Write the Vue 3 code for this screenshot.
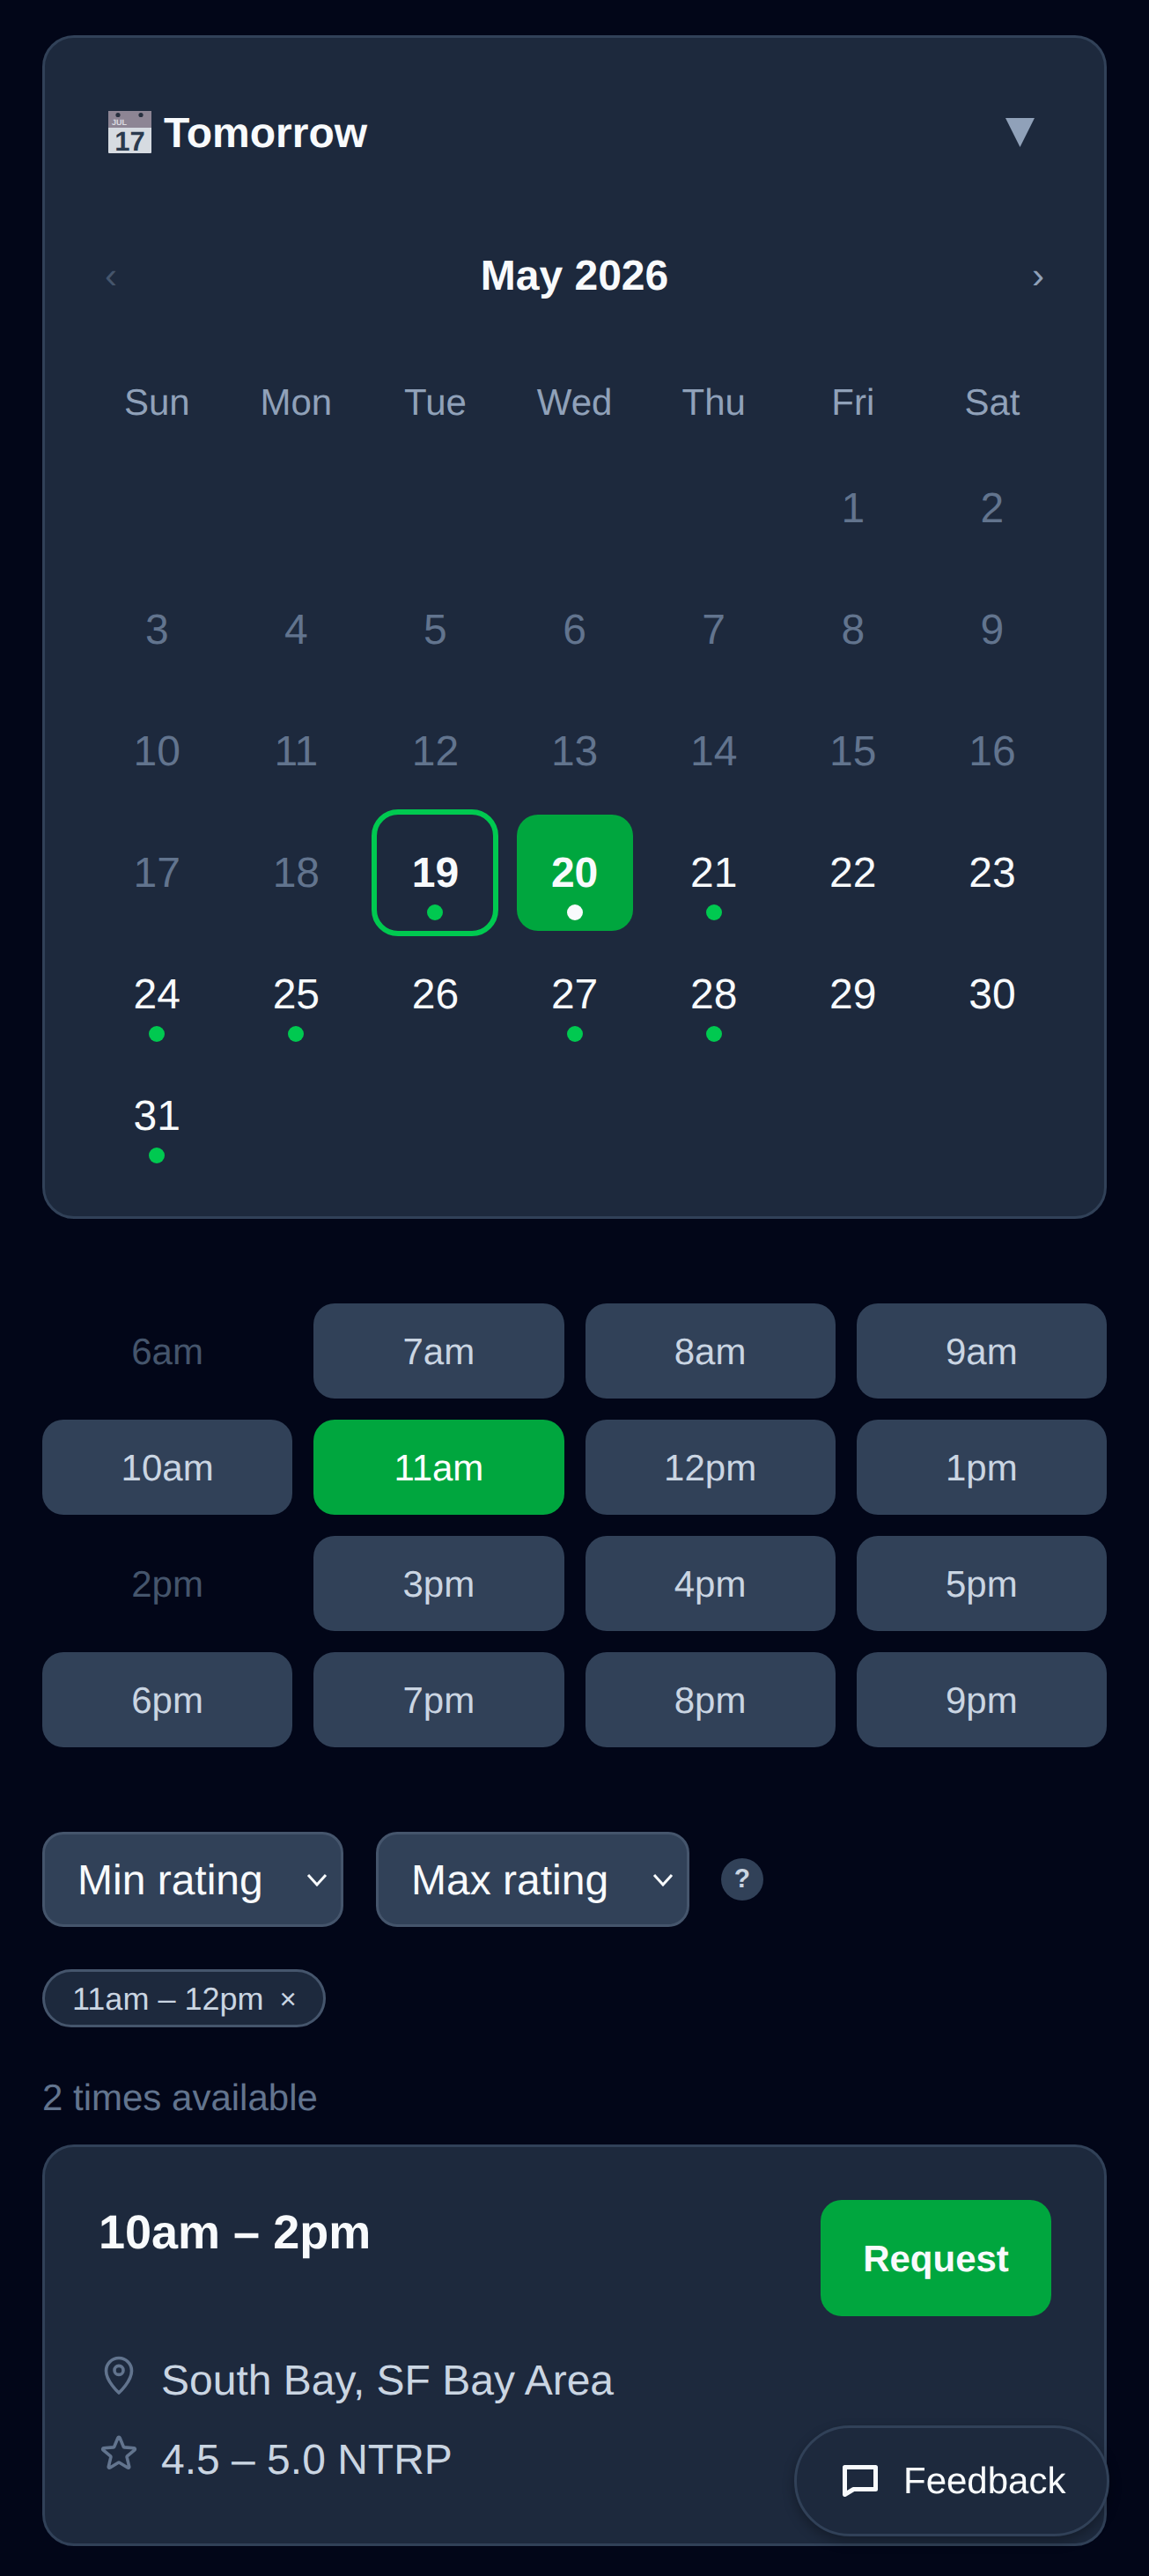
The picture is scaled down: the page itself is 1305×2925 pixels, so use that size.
<script setup>
const weekdays = ['Sun', 'Mon', 'Tue', 'Wed', 'Thu', 'Fri', 'Sat'];
const hasDot = [19, 20, 21, 24, 25, 27, 28, 31];

// May 2026 starts on a Friday
const days = [];
for (let i = 0; i < 5; i++) days.push(null);
for (let d = 1; d <= 31; d++) days.push(d);

const times = [
  { label: '6am', off: true }, { label: '7am' }, { label: '8am' }, { label: '9am' },
  { label: '10am' }, { label: '11am', on: true }, { label: '12pm' }, { label: '1pm' },
  { label: '2pm', off: true }, { label: '3pm' }, { label: '4pm' }, { label: '5pm' },
  { label: '6pm' }, { label: '7pm' }, { label: '8pm' }, { label: '9pm' },
];
</script>

<template>
  <div class="page">
    <div class="calendar">
      <div class="cal-head">
        <div class="cal-title">
          <svg class="cal-emoji" width="49" height="48" viewBox="0 0 49 48">
            <rect x="0" y="0" width="49" height="48" rx="1" fill="#d6dbe1" />
            <rect x="0" y="0" width="49" height="19" fill="#8d8594" />
            <circle cx="11" cy="4.5" r="2.6" fill="#27303f" />
            <circle cx="37" cy="4.5" r="2.6" fill="#27303f" />
            <text x="4" y="15.5" class="emoji-month">JUL</text>
            <text x="24.5" y="45" class="emoji-day">17</text>
          </svg>
          <span>Tomorrow</span>
        </div>
        <svg class="collapse" width="33" height="33" viewBox="0 0 33 33">
          <polygon points="0,0 33,0 16.5,33" fill="#90a1b9" />
        </svg>
      </div>

      <div class="month-row">
        <span class="nav nav-off">‹</span>
        <span class="month">May 2026</span>
        <span class="nav">›</span>
      </div>

      <div class="week">
        <div v-for="w in weekdays" :key="w" class="week-day">{{ w }}</div>
      </div>

      <div class="days">
        <div v-for="(d, i) in days" :key="i" class="cell">
          <div
            v-if="d"
            :class="['day', { past: d < 19, today: d === 19, picked: d === 20 }]"
          >
            {{ d }}
            <span v-if="hasDot.includes(d)" class="dot"></span>
          </div>
        </div>
      </div>
    </div>

    <div class="times">
      <div
        v-for="t in times"
        :key="t.label"
        :class="['time', { off: t.off, on: t.on }]"
      >
        {{ t.label }}
      </div>
    </div>

    <div class="filters">
      <div class="select select-min">
        <span>Min rating</span>
        <svg width="24" height="15" viewBox="0 0 24 15">
          <path d="M2 2l10 11L22 2" fill="none" stroke="#f8fafc" stroke-width="3" />
        </svg>
      </div>
      <div class="select select-max">
        <span>Max rating</span>
        <svg width="24" height="15" viewBox="0 0 24 15">
          <path d="M2 2l10 11L22 2" fill="none" stroke="#f8fafc" stroke-width="3" />
        </svg>
      </div>
      <div class="help">?</div>
    </div>

    <div class="chip">
      <span>11am – 12pm</span>
      <span class="chip-x">×</span>
    </div>

    <div class="count">2 times available</div>

    <div class="result">
      <div class="result-top">
        <div class="result-time">10am – 2pm</div>
        <div class="request">Request</div>
      </div>
      <div class="result-info">
        <div class="info-row">
          <svg class="info-icon" width="48" height="48" viewBox="0 0 24 24" fill="none" stroke="#62748e" stroke-width="1.8" stroke-linejoin="round">
            <circle cx="12" cy="9.2" r="2.5" />
            <path d="M19.25 9.5c0 6-7.25 12.5-7.25 12.5S4.75 15.5 4.75 9.5a7.25 7.25 0 1 1 14.5 0Z" />
          </svg>
          <span>South Bay, SF Bay Area</span>
        </div>
        <div class="info-row">
          <svg class="info-icon star" width="48" height="48" viewBox="0 0 24 24" fill="none" stroke="#62748e" stroke-width="1.8" stroke-linejoin="round">
            <path d="M11.48 3.499a.562.562 0 0 1 1.04 0l2.125 5.111a.563.563 0 0 0 .475.345l5.518.442c.499.04.701.663.321.988l-4.204 3.602a.563.563 0 0 0-.182.557l1.285 5.385a.562.562 0 0 1-.84.61l-4.725-2.885a.562.562 0 0 0-.586 0L6.982 20.54a.562.562 0 0 1-.84-.61l1.285-5.386a.562.562 0 0 0-.182-.557l-4.204-3.602a.562.562 0 0 1 .321-.988l5.518-.442a.563.563 0 0 0 .475-.345L11.48 3.5Z" />
          </svg>
          <span>4.5 – 5.0 NTRP</span>
        </div>
      </div>
    </div>

    <div class="feedback">
      <svg width="40" height="36" viewBox="0 0 40 36">
        <path d="M2.5 2.5h35v25H12.5L2.5 33.5Z" fill="none" stroke="#f8fafc" stroke-width="5" stroke-linejoin="round" />
      </svg>
      <span>Feedback</span>
    </div>
  </div>
</template>

<style>
html,
body {
  margin: 0;
  background: #020618;
}
</style>

<style scoped>
.page {
  padding: 40px 48px 34px;
  font-family: "Liberation Sans", Arial, sans-serif;
  color: #f8fafc;
  text-rendering: geometricPrecision;
}

.calendar {
  background: #1d293d;
  border: 3px solid #314158;
  border-radius: 36px;
  padding: 48px;
}

.cal-head {
  display: flex;
  align-items: center;
  justify-content: space-between;
  height: 118px;
  padding: 0 31px 0 24px;
}

.cal-title {
  display: flex;
  align-items: center;
  gap: 14px;
  font-size: 48px;
  font-weight: 700;
}

.cal-title span {
  padding-top: 2px;
}

.cal-emoji {
  overflow: visible;
}

.emoji-month {
  font-family: "Liberation Sans", sans-serif;
  font-size: 9px;
  fill: #dcdde2;
}

.emoji-day {
  font-family: "Liberation Sans", sans-serif;
  font-size: 31px;
  fill: #2a3a4e;
  text-anchor: middle;
}

.month-row {
  display: flex;
  align-items: center;
  justify-content: space-between;
  height: 72px;
  margin-top: 67px;
  padding: 0 20px;
}

.month {
  padding-top: 2px;
  font-size: 48px;
  font-weight: 700;
}

.nav {
  padding-top: 2px;
  font-size: 42px;
  line-height: 72px;
  color: #90a1b9;
}

.nav-off {
  color: #45556c;
}

.week {
  display: grid;
  grid-template-columns: repeat(7, 1fr);
  column-gap: 6px;
  height: 66px;
  line-height: 66px;
  margin-top: 76px;
  margin-bottom: 21px;
  padding: 0 3px 0 3.2px;
}

.week-day {
  text-align: center;
  font-size: 42px;
  color: #90a1b9;
}

.days {
  display: grid;
  grid-template-columns: repeat(7, 1fr);
  gap: 6px;
  padding: 0 3px 0 3.2px;
}

.cell {
  height: 132px;
  display: flex;
  justify-content: center;
}

.day {
  position: relative;
  width: 132px;
  height: 132px;
  display: flex;
  align-items: center;
  justify-content: center;
  border-radius: 24px;
  font-size: 48px;
}

.past {
  color: #62748e;
}

.today {
  font-weight: 700;
  outline: 6px solid #00c950;
}

.picked {
  font-weight: 700;
  background: #00a63e;
}

.dot {
  position: absolute;
  left: 57px;
  bottom: 12px;
  width: 18px;
  height: 18px;
  border-radius: 50%;
  background: #00c950;
}

.picked .dot {
  background: #f8fafc;
}

.times {
  display: grid;
  grid-template-columns: repeat(4, 1fr);
  gap: 24px;
  margin-top: 96px;
}

.time {
  box-sizing: border-box;
  height: 108px;
  padding-top: 2px;
  display: flex;
  align-items: center;
  justify-content: center;
  border-radius: 24px;
  background: #314158;
  color: #cad5e2;
  font-size: 42px;
}

.time.off {
  background: none;
  color: #45556c;
}

.time.on {
  background: #00a63e;
  color: #fff;
}

.filters {
  display: flex;
  align-items: center;
  gap: 37px;
  margin-top: 96px;
}

.select {
  box-sizing: border-box;
  height: 108px;
  display: flex;
  align-items: center;
  justify-content: space-between;
  padding: 0 15px 0 37px;
  background: #314158;
  border: 3px solid #45556c;
  border-radius: 24px;
  font-size: 48px;
}

.select span {
  padding-top: 2px;
}

.select-min {
  width: 342px;
}

.select-max {
  width: 356px;
}

.help {
  width: 48px;
  height: 48px;
  margin-left: -1px;
  display: flex;
  align-items: center;
  justify-content: center;
  border-radius: 50%;
  background: #314158;
  color: #cad5e2;
  font-size: 30px;
  font-weight: 700;
}

.chip {
  box-sizing: border-box;
  width: 322px;
  height: 66px;
  display: flex;
  align-items: center;
  gap: 18px;
  margin-top: 48px;
  padding: 2px 31px 0;
  background: #1d293d;
  border: 3px solid #45556c;
  border-radius: 33px;
  color: #cad5e2;
  font-size: 36px;
  white-space: nowrap;
}

.chip-x {
  font-size: 33px;
}

.count {
  margin-top: 48px;
  font-size: 42px;
  line-height: 63px;
  color: #62748e;
}

.result {
  margin-top: 22px;
  background: #1d293d;
  border: 3px solid #314158;
  border-radius: 36px;
  padding: 60px;
  height: 456px;
  box-sizing: border-box;
}

.result-top {
  display: flex;
  justify-content: space-between;
  align-items: flex-start;
}

.result-time {
  padding-left: 1px;
  font-size: 54px;
  font-weight: 700;
  line-height: 75px;
}

.request {
  box-sizing: border-box;
  width: 262px;
  height: 132px;
  padding-top: 2px;
  display: flex;
  align-items: center;
  justify-content: center;
  border-radius: 24px;
  background: #00a63e;
  font-size: 42px;
  font-weight: 700;
}

.result-info {
  display: flex;
  flex-direction: column;
  gap: 18px;
  margin-top: 38px;
}

.info-row {
  display: flex;
  align-items: flex-start;
  gap: 24px;
  font-size: 48px;
  line-height: 72px;
  color: #cad5e2;
}

.info-icon {
  flex-shrink: 0;
  margin-top: 5px;
}

.info-icon.star {
  margin-top: 3px;
}

.feedback {
  box-sizing: border-box;
  position: fixed;
  right: 45px;
  bottom: 45px;
  width: 358px;
  height: 126px;
  display: flex;
  align-items: center;
  gap: 29px;
  padding-left: 52px;
  background: #1d293d;
  border: 3px solid #314158;
  border-radius: 63px;
  box-shadow: 0 6px 14px rgba(0, 0, 0, 0.3);
  font-size: 42px;
}
</style>
